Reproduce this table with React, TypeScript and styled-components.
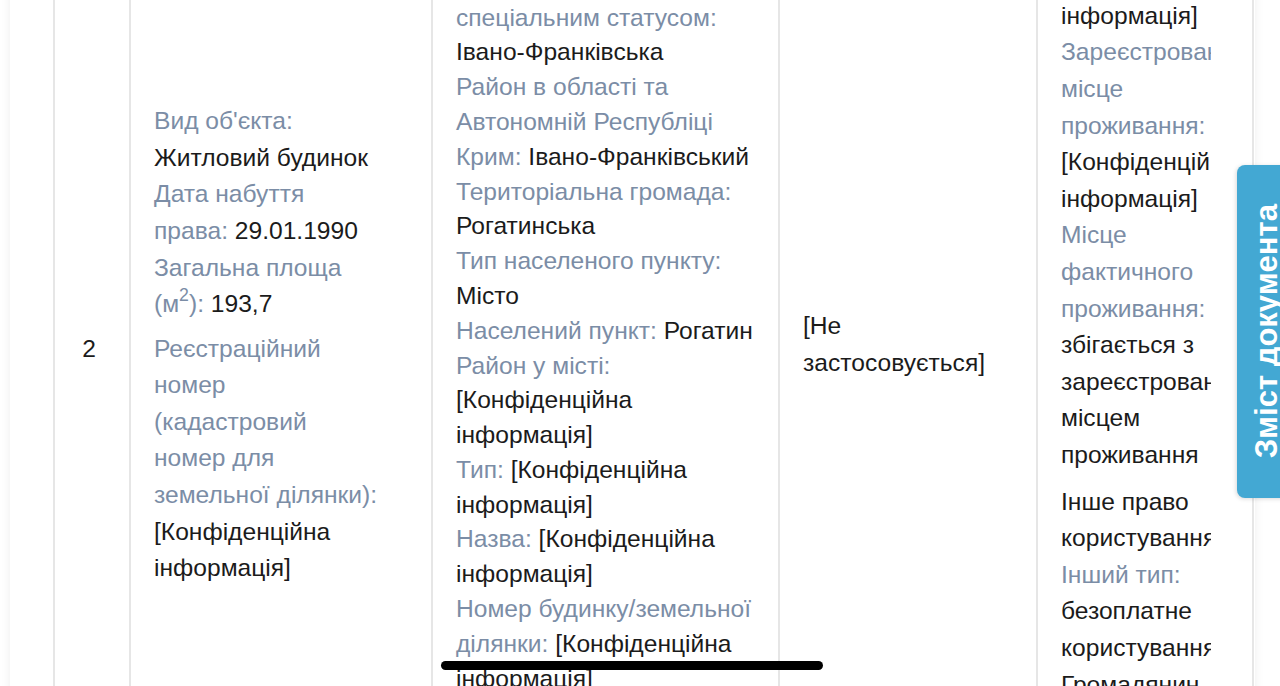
import styled, { createGlobalStyle } from "styled-components"

const GlobalStyle = createGlobalStyle`
  html, body {
    margin: 0;
    padding: 0;
    background: #fff;
  }
  body {
    font-family: "Liberation Sans", Arial, Helvetica, sans-serif;
  }
`

export default function App () {
  return <Screen>
    <GlobalStyle />
    <Card>
      <Row>
        <NumberCell $first>2</NumberCell>

        <Cell>
          <Fields $width={227} $lh={36.6}>
            <div><Label>Вид об'єкта:</Label> Житловий будинок</div>
            <div><Label>Дата набуття права:</Label> 29.01.1990</div>
            <div><Label>Загальна площа (м<Sup>2</Sup>):</Label> 193,7</div>
            <Field $gap={8}>
              <Label>Реєстраційний номер (кадастровий номер для земельної ділянки):</Label> [Конфіденційна інформація]
            </Field>
          </Fields>
        </Cell>

        <Cell>
          <Fields $width={310} $lh={34.8} $shift={7}>
            <div><Label>Країна:</Label> Україна</div>
            <div>
              <Label>Область/Автономна<br />Республіка Крим/місто зі<br />спеціальним статусом:</Label> Івано-Франківська
            </div>
            <div><Label>Район в області та Автономній Республіці Крим:</Label> Івано-Франківський</div>
            <div><Label>Територіальна громада:</Label> Рогатинська</div>
            <div><Label>Тип населеного пункту:</Label> Місто</div>
            <div><Label>Населений пункт:</Label> Рогатин</div>
            <div><Label>Район у місті:</Label> [Конфіденційна інформація]</div>
            <div><Label>Тип:</Label> [Конфіденційна інформація]</div>
            <div><Label>Назва:</Label> [Конфіденційна інформація]</div>
            <div><Label>Номер будинку/земельної ділянки:</Label> [Конфіденційна інформація]</div>
            <div><Label>Номер корпусу/секції:</Label> [Конфіденційна інформація]</div>
          </Fields>
        </Cell>

        <Cell>
          <Fields $width={200} $lh={36.6}>
            <div>[Не застосовується]</div>
          </Fields>
        </Cell>

        <Cell>
          <Fields $width={150} $lh={36.6} $shift={11} $clip>
            <div>[Конфіденційна інформація]</div>
            <div><Label>Зареєстроване місце проживання:</Label> [Конфіденційна інформація]</div>
            <div><Label>Місце фактичного проживання:</Label> збігається з зареєстрованим місцем проживання</div>
            <Field $gap={10}>
              <div>Інше право користування</div>
              <div><Label>Інший тип:</Label> безоплатне користування</div>
              <div>Громадянин України</div>
            </Field>
          </Fields>
        </Cell>
      </Row>
    </Card>

    <TocTab>
      <TocLabel>Зміст документа</TocLabel>
    </TocTab>

    <HomeBar />
  </Screen>
}

const Screen = styled.div`
  position: relative;
  height: 686px;
  box-sizing: border-box;
  padding-top: 4px;
  overflow: hidden;
  display: flex;
  flex-direction: column;
  justify-content: center;
`

const Card = styled.div`
  flex-shrink: 0;
  margin-left: 10px;
  width: 1245px;
  padding-left: 43px;
  box-sizing: border-box;
  background: #fff;
  box-shadow: 0 0 10px rgba(0, 0, 0, 0.07);
`

const Row = styled.div`
  display: grid;
  grid-template-columns: 78px 302px 347px 258px 216px;
  height: 1000px;
`

const Cell = styled.div<{ $first?: boolean }>`
  display: flex;
  align-items: center;
  box-sizing: border-box;
  padding-left: 23px;
  border-right: 2px solid #e6e6e6;
  ${p => p.$first && "border-left: 2px solid #e6e6e6;"}
`

const NumberCell = styled(Cell)`
  justify-content: center;
  padding: 8px 6px 0 0;
  font-size: 24.6px;
  line-height: 36.6px;
  color: #1b1b1b;
`

const Fields = styled.div<{ $width: number; $lh: number; $shift?: number; $clip?: boolean }>`
  width: ${p => p.$width}px;
  padding-top: ${p => p.$shift ?? 0}px;
  font-size: 24.6px;
  line-height: ${p => p.$lh}px;
  color: #1b1b1b;
  ${p => p.$clip && "overflow: hidden;"}
`

const Field = styled.div<{ $gap?: number }>`
  margin-top: ${p => p.$gap ?? 0}px;
`

const Label = styled.span`
  color: #7b8da6;
`

const Sup = styled.sup`
  font-size: 0.72em;
  line-height: 0;
  vertical-align: 0.6em;
`

const TocTab = styled.div`
  position: absolute;
  left: 1237px;
  top: 165px;
  width: 60px;
  height: 333px;
  display: flex;
  align-items: center;
  justify-content: center;
  background: #43a8d3;
  border-radius: 8px 0 0 8px;
  box-shadow: -1px 1px 4px rgba(0, 0, 0, 0.15);
`

const TocLabel = styled.span`
  writing-mode: vertical-rl;
  transform: rotate(180deg);
  color: #fff;
  font-weight: 700;
  font-size: 31px;
  white-space: nowrap;
`

const HomeBar = styled.div`
  position: absolute;
  left: 441px;
  top: 661px;
  width: 382px;
  height: 9px;
  border-radius: 5px;
  background: #000;
`
